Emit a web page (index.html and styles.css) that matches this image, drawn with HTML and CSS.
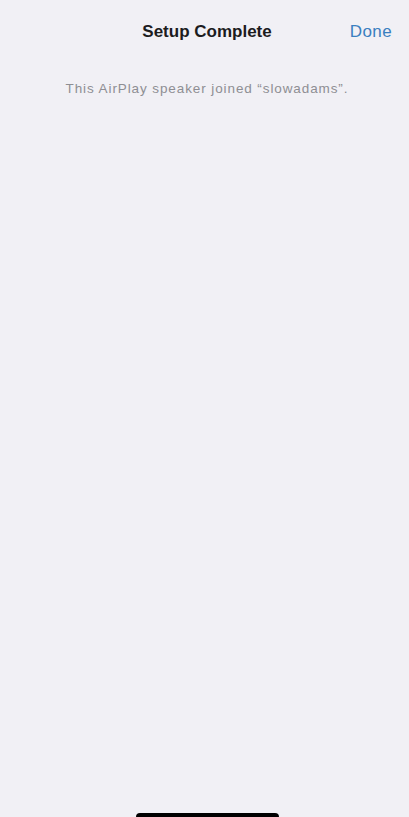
FILE: index.html
```html
<!DOCTYPE html>
<html>
<head>
<meta charset="utf-8">
<link rel="stylesheet" href="styles.css">
</head>
<body>
<div class="screen">
  <header class="nav">
    <span class="spacer"></span>
    <h1 class="title">Setup Complete</h1>
    <span class="done">Done</span>
  </header>
  <p class="message">This AirPlay speaker joined “slowadams”.</p>
  <div class="grow"></div>
  <div class="home"><span class="bar"></span></div>
</div>
</body>
</html>
```
FILE: styles.css
```css
html, body {
  margin: 0;
  padding: 0;
  background: #f1f0f5;
}
.screen {
  width: 409px;
  height: 817px;
  box-sizing: border-box;
  padding-left: 5px;
  display: flex;
  flex-direction: column;
  font-family: "Liberation Sans", Arial, sans-serif;
  overflow: hidden;
}
.nav {
  display: grid;
  grid-template-columns: 1fr auto 1fr;
  align-items: center;
  height: 24px;
  margin-top: 20px;
}
.title {
  margin: 0;
  font-size: 17px;
  font-weight: bold;
  color: #1c1c1e;
}
.done {
  justify-self: end;
  margin-right: 17px;
  font-size: 17px;
  letter-spacing: 0.4px;
  color: #3a7fc0;
}
.message {
  margin: 37px 0 0;
  text-align: center;
  font-size: 13.5px;
  letter-spacing: 0.9px;
  color: #8e8e93;
}
.grow {
  flex: 1;
}
.home {
  display: flex;
  justify-content: center;
  height: 4px;
}
.bar {
  width: 143px;
  height: 8px;
  background: #000;
  border-radius: 4px;
}
```
